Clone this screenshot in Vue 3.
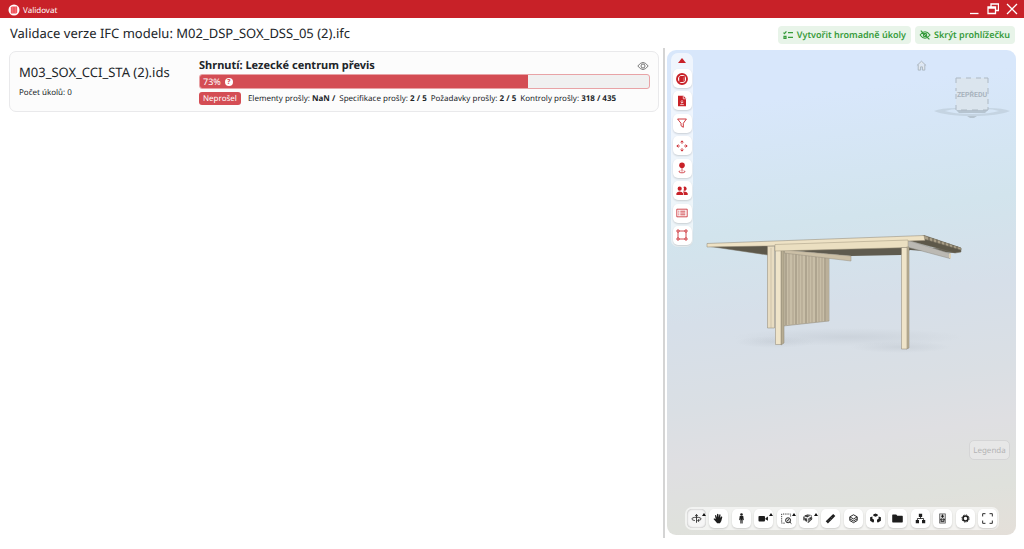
<script setup>
import { ref } from 'vue'

const progress = ref(73)
const stats = [
  { label: 'Elementy prošly:', value: 'NaN /' },
  { label: 'Specifikace prošly:', value: '2 / 5' },
  { label: 'Požadavky prošly:', value: '2 / 5' },
  { label: 'Kontroly prošly:', value: '318 / 435' },
]

const sideTools = [
  { label: 'Model', icon: '<circle cx="7" cy="7" r="5" fill="#fff" stroke="currentColor" stroke-width="1.9"/><path d="M4.2 5 5.4 4h4.4v5L8.6 10H4.2z" fill="currentColor"/><path d="M8.4 5.4V10" fill="none" stroke="#f5b5b8" stroke-width=".4"/>' },
  { label: 'Soubor', icon: '<path d="M3 1.8h5.5L11 4.4V12.2H3z" fill="currentColor"/><path d="M8.3 2v2.8H11M7 6v3M5.6 7.8 7 9.2l1.4-1.4M5.2 10.6h3.6" fill="none" stroke="#fff" stroke-width=".7"/>' },
  { label: 'Filtr', icon: '<path d="M2.6 3h8.8L8.3 7.3v4L6 9.7V7.3z" fill="none" stroke="currentColor" stroke-width=".9"/>' },
  { label: 'Přesunout', icon: '<path d="M7 1.8v3M7 9.2v3M1.8 7h3M9.2 7h3M5.5 3.4 7 1.9l1.5 1.5M5.5 10.6 7 12.1l1.5-1.5M3.4 5.5 1.9 7l1.5 1.5M10.6 5.5 12.1 7l-1.5 1.5" fill="none" stroke="currentColor" stroke-width=".9"/>' },
  { label: 'Bod', icon: '<circle cx="7" cy="4.3" r="2.8" fill="currentColor"/><path d="M7 6v4.5M5.3 9.8c-2.2.5-1.4 2 1.7 2s3.9-1.5 1.7-2" fill="none" stroke="currentColor" stroke-width=".8"/>' },
  { label: 'Uživatelé', icon: '<path d="M4.7 2.6a2.1 2.1 0 1 1 0 4.2 2.1 2.1 0 0 1 0-4.2m4.8 0a2.1 2.1 0 1 1-1 3.9q1-1.7 0-3.5zM1.4 11V9.2q1-1.7 3.3-1.7T8 9.2V11zm7.3 0V9L8 7.6q3.6-.5 4.7 1.6V11z" fill="currentColor"/>' },
  { label: 'Seznam', icon: '<path d="M1.8 3.2h10.4v7.6H1.8zM5.3 5.2h5M5.3 7h5M5.3 8.8h5M3.3 5.2h1M3.3 7h1M3.3 8.8h1" fill="none" stroke="currentColor" stroke-width=".8"/>' },
  { label: 'Výběr', icon: '<path d="M3 3h8v8H3z" fill="none" stroke="currentColor" stroke-width=".8"/><path d="M2 2h2v2H2zM10 2h2v2h-2zM2 10h2v2H2zM10 10h2v2h-2z" fill="#fff" stroke="currentColor" stroke-width=".8"/>' },
]

const bottomTools = [
  { label: 'Orbita', menu: true, active: true, icon: '<path d="M5.2 9.2C.7 8.5.6 5.9 7 5.6c6.3.2 6.3 3 1.5 3.6M7 11.6V2.8M5.6 4.2 7 2.6l1.4 1.6M9.8 7.8 8.2 9.2l1.6 1.3" fill="none" stroke="currentColor" stroke-width=".9"/>' },
  { label: 'Posun', icon: '<path d="M4.7 11 1.6 7.5q.4-1 1.4-.4l1 .8-.8-4.2q.8-1 1.4 0l.8 2.4V2.3q.8-.9 1.5 0l.3 3.6.7-3.1q.9-.7 1.3.2l-.3 3.5 1-1.6q.9-.4 1.2.5l-1.1 4.3-1.4 2.5H5.5z" fill="currentColor"/>' },
  { label: 'Procházka', icon: '<circle cx="7" cy="2.7" r="1.4" fill="currentColor"/><path d="M5.1 4.4h3.8l.6 4.2-.9.2-.4-2V12.3H7.2V9h-.4v3.3h-1V6.8l-.4 2-.9-.2z" fill="currentColor"/>' },
  { label: 'Kamera', menu: true, icon: '<rect x="1.6" y="4.2" width="7" height="6" rx="1" fill="currentColor"/><path d="m9.1 6.7 2.7-1.8v4.6L9.1 7.8z" fill="currentColor"/>' },
  { label: 'Přiblížení výběru', menu: true, icon: '<path d="M5 12H1.8V2.2h9.6v2.6" fill="none" stroke="currentColor" stroke-width=".9" stroke-dasharray="1.4 1"/><circle cx="8.7" cy="8.9" r="2.7" fill="#ddd" stroke="currentColor" stroke-width="1"/><path d="m10.5 10.8 1.8 1.7M7.5 9.9l2.4-2.2" stroke="currentColor"/>' },
  { label: 'Objekty', menu: true, icon: '<path d="m1.8 5 3.8-2.7 4.8.9.8 4.4-4.2 4.2-4-2.4z" fill="#666"/><path d="m2.4 5.3 3.8 1.2v4.4M6.2 6.5 10 4M8.5 7v3" fill="none" stroke="#fff" stroke-width="1.1"/><path d="m3 3.8 3.6 1M3 8l2.5 1M7.2 8.2l3-2M7 10.5l3.6-3M2 5v4" fill="none" stroke="currentColor"/>' },
  { label: 'Měření', icon: '<path d="m1.9 10 8-7.8L12.2 4.4 4.2 12.3z" fill="currentColor"/><path d="m4.5 9.2.7.7m1.1-2.4.7.7m1.1-2.4.7.7" stroke="#fff" stroke-width=".4"/>' },
  { label: 'Vrstvy', icon: '<path d="m3 5.2 4-2.2 4 2.2-4 2.3zM3 5.4v3.8l4 2.3 4-2.3V5.4M3 7.4l4 2.2 4-2.2" fill="none" stroke="currentColor" stroke-width="1"/>' },
  { label: 'Rozložení modelu', icon: '<path d="m7 1.6 2.4 1.2V4L7 5.2 4.6 4V2.8zM1.2 5.6l2.5-.8v2.4l1.8 1.2-.3 2.6-1 .4-3-2zM12.8 5.6l-2.5-.8v2.4L8.5 8.4l.3 2.6 1 .4 3-2z" fill="currentColor"/>' },
  { label: 'Složka', icon: '<path d="M1.3 3.5q0-.7.7-.7h3.6l1.2 1.3H12q.7 0 .7.7v5.7q0 .7-.7.7H2q-.7 0-.7-.7z" fill="currentColor"/>' },
  { label: 'Struktura', icon: '<path d="M5.2 1.8h3.6v3.5H5.2zM1.9 8.6h3.5v3.5H1.9zm6.7 0h3.5v3.5H8.6z" fill="currentColor"/><path d="M7 5v2M3.7 9V7h6.6v2" fill="none" stroke="currentColor" stroke-width=".9"/>' },
  { label: 'Vlastnosti', icon: '<path d="M3.8 2h6.4v10H3.8z" fill="#ccc" stroke="#666" stroke-width=".8"/><path d="M7 2.8v3.4M5.5 4.5h3" stroke="currentColor" stroke-width="1.1"/><path d="M5 7.5h1.4v1.4H5zM7.7 7.5h1.4v1.4H7.7zM5 10.3h4" fill="none" stroke="currentColor" stroke-width=".9"/>' },
  { label: 'Nastavení', icon: '<circle cx="7" cy="7" r="2.7" fill="none" stroke="currentColor" stroke-width="1.7"/><circle cx="7" cy="7" r="3.9" fill="none" stroke="currentColor" stroke-width="1" stroke-dasharray="1.55 1.51"/>' },
  { label: 'Celá obrazovka', icon: '<path d="M1.8 4.8v-3h3M9.2 1.8h3v3M12.2 9.2v3h-3M4.8 12.2h-3v-3" fill="none" stroke="currentColor"/>' },
]

const slats = [786, 789, 793, 796, 799, 802, 806, 809, 812, 816, 819, 822, 825, 827]
const planks = [929, 933, 937, 941, 945, 949, 953, 957]
</script>

<template>
  <div class="app">
    <header class="titlebar">
      <svg class="brand" viewBox="0 0 12 12" aria-hidden="true"><circle cx="6" cy="6" r="5.5" fill="#fff" /><path d="m2.8 3.4 1-.9h5.4v6l-1 1H2.8z" fill="#f0545c" /><path d="M4.6 3v6.4M7.4 3v6.4" stroke="#f58a8f" stroke-width=".5" /></svg>
      <span class="app-name">Validovat</span>
      <div class="window-buttons">
        <button type="button" aria-label="Minimalizovat"><svg viewBox="0 0 12 12"><path d="M2 10.5h8.5" /></svg></button>
        <button type="button" aria-label="Obnovit"><svg viewBox="0 0 12 12"><path d="M4 4V1h7.5v6.5H8.5M1 4h7.5v6.5H1zM1 5h7.5" /></svg></button>
        <button type="button" aria-label="Zavřít"><svg viewBox="0 0 12 12"><path d="m1 1 10 10M11 1 1 11" /></svg></button>
      </div>
    </header>

    <div class="heading">
      <h1>Validace verze IFC modelu: M02_DSP_SOX_DSS_05 (2).ifc</h1>
      <div class="actions">
        <button type="button" class="action">
          <svg viewBox="0 0 12 12" aria-hidden="true"><path d="m1.5 3.6 1 1L4.4 2.4M6 3.6h5M6 8.4h5M2 7.4h2v2H2z" /></svg>
          Vytvořit hromadně úkoly
        </button>
        <button type="button" class="action">
          <svg viewBox="0 0 12 12" aria-hidden="true"><path d="M1 6q5-6.5 10 0-5 6.5-10 0M1.8 1.6l8.6 8.8" /><circle cx="6" cy="6" r="1.7" /></svg>
          Skrýt prohlížečku
        </button>
      </div>
    </div>

    <main class="workspace">
      <section class="results">
        <article class="card">
          <div class="source">
            <h2>M03_SOX_CCI_STA (2).ids</h2>
            <p>Počet úkolů: 0</p>
          </div>
          <div class="summary">
            <div class="summary-head">
              <h3>Shrnutí: Lezecké centrum převis</h3>
              <button type="button" class="eye" aria-label="Zobrazit">
                <svg viewBox="0 0 12 12"><path d="M.8 6Q6-1 11.2 6 6 13 .8 6z" /><circle cx="6" cy="6" r="2" /></svg>
              </button>
            </div>
            <div class="progress" role="progressbar" :aria-valuenow="progress">
              <div class="fill" :style="{ width: progress + '%' }">
                {{ progress }}%<span class="help">?</span>
              </div>
            </div>
            <div class="stats">
              <span class="badge">Neprošel</span>
              <span v-for="s in stats" :key="s.label">{{ s.label }} <b>{{ s.value }}</b></span>
            </div>
          </div>
        </article>
      </section>

      <div class="divider"></div>

      <section class="viewer">
        <svg class="scene" viewBox="667 50 349 485" preserveAspectRatio="xMidYMid meet" aria-label="3D model">
          <defs>
            <radialGradient id="shade"><stop offset="0" stop-color="#a8afb9" stop-opacity=".25" /><stop offset="1" stop-color="#a8afb9" stop-opacity="0" /></radialGradient>
          </defs>
          <ellipse cx="848" cy="337" rx="115" ry="9" fill="url(#shade)" />
          <ellipse cx="775" cy="342" rx="40" ry="6" fill="url(#shade)" />
          <ellipse cx="900" cy="347" rx="50" ry="6" fill="url(#shade)" />
          <g stroke-linejoin="round" stroke-width=".5">
            <path d="M707 246 768 245v10z" fill="#5d584a" stroke="#777162" />
            <path d="M781 250 829 257v64l-46 5z" fill="#c8bea7" stroke="#888170" />
            <path v-for="(x, i) in slats" :key="x" :d="`M${x} 252v${73 - i / 3}`" :stroke="i % 3 ? '#a39985' : '#7f7766'" stroke-width=".7" />
            <path d="m783 250 120-3 54 2-2 4-45-3-9 5-50 1z" fill="#5f5b4f" />
            <path d="m785 250 66 6v5l-67-8z" fill="#cbbfa6" stroke="#999080" />
            <path d="M767.5 246h7v82h-7z" fill="#e8dcc1" stroke="#8e8573" />
            <path d="M771 248v80" stroke="#b8ad96" />
            <path d="m781 250 3 1v92l-3 2z" fill="#b7ac92" stroke="#8e8573" />
            <path d="M775.5 250h5.5v94.5h-5.5z" fill="#efe4c9" stroke="#8e8573" />
            <path d="m924 235.5 37 12.5v4l-6 1-45-12z" fill="#5d5849" stroke="#777161" />
            <path d="m924 235.5 37 12.5v2l-37-11z" fill="#aa9f87" stroke="#777161" />
            <path v-for="x in planks" :key="x" :d="`M${x} ${237 + (x - 929) / 3}v4`" stroke="#5c5748" stroke-width="1" />
            <path d="m907 240 43 13.5v5L907 247z" fill="#bbb9b3" stroke="#8d8a82" />
            <path d="M949 253.5h2v5l-2-.5z" fill="#ded3b8" />
            <path d="m707 243.5 217-8 1 5-17 .5-140 5-61 1z" fill="#eee2c5" stroke="#8e8573" />
            <path d="m775 244.5 133-4.5v7.5L775 251z" fill="#ebdfc1" stroke="#a0967f" />
            <path d="M906.5 247h2.5v101l-2.5 1z" fill="#bcb197" stroke="#8e8573" />
            <path d="M901.5 247.5h5.5V349h-5.5z" fill="#efe4c9" stroke="#8e8573" />
          </g>
        </svg>

        <div class="toolbar side" role="toolbar" aria-label="Nástroje modelu">
          <button type="button" class="collapse" aria-label="Sbalit"></button>
          <div class="side-list">
            <button v-for="t in sideTools" :key="t.label" type="button" class="tool" :aria-label="t.label">
              <svg viewBox="0 0 14 14" v-html="t.icon"></svg>
            </button>
          </div>
        </div>

        <div class="navigation">
          <button type="button" class="home" aria-label="Výchozí pohled">
            <svg viewBox="0 0 12 12"><path d="m1 6 5-4.7L11 6M2.4 5v6H5V7.5h2V11h2.6V5" /></svg>
          </button>
          <svg class="cube" viewBox="0 0 80 46" aria-label="Pohled zepředu">
            <path d="M2 35Q9 32 24 32h32q15 0 22 3-12 5-38 5T2 35m11 0q9 3 27 3t27-3q-6-2-14-2H27q-8 0-14 2" fill="#bccbd7" fill-rule="evenodd" opacity=".65" />
            <path d="M24 34h32l-3 3H27zM35 40h10l-3 2h-4z" fill="#b6c4d0" />
            <path d="M24 2h32v32H24z" fill="#dbe5ee" />
            <path d="M24 7V2h5M34 2h5M44 2h5M52 2h4v5M56 12v6M56 23v5M56 31v3h-5M46 34h-6M35 34h-6M24 29v5M24 23v-5M24 12v3" fill="none" stroke="#adb8c3" />
            <text x="40" y="21">ZEPŘEDU</text>
          </svg>
        </div>

        <button type="button" class="legend">Legenda</button>

        <div class="toolbar bottom" role="toolbar" aria-label="Nástroje pohledu">
          <button v-for="t in bottomTools" :key="t.label" type="button" class="tool" :class="{ active: t.active, menu: t.menu }" :aria-label="t.label">
            <svg viewBox="0 0 14 14" v-html="t.icon"></svg>
          </button>
        </div>
      </section>
    </main>
  </div>
</template>

<style>
body { margin: 0; background: #fff; }
</style>

<style scoped>
* { box-sizing: border-box; }
.app { display: flex; flex-direction: column; min-height: 100vh; font-family: "Noto Sans", "Open Sans", sans-serif; font-size: 8px; color: #212529; text-rendering: geometricPrecision; }
button { font: inherit; text-rendering: inherit; border: 0; padding: 0; margin: 0; background: none; color: inherit; display: flex; align-items: center; justify-content: center; }
svg { display: block; flex: none; }
h1, h2, h3, p { margin: 0; font-weight: 400; }
.titlebar { display: flex; align-items: center; height: 18px; padding: 2px 6px 0 8px; background: #c82128; color: #fff; }
.brand { width: 12px; height: 12px; margin-right: 3px; }
.window-buttons { display: flex; gap: 7px; margin-left: auto; padding-bottom: 2px; }
.window-buttons svg { width: 12px; height: 12px; fill: none; stroke: #fff; stroke-width: 1.3; }
.heading { display: flex; align-items: center; justify-content: space-between; height: 32px; padding: 0 9px 0 10px; }
h1 { font-size: 13px; line-height: 18px; padding-bottom: 2px; }
.actions { display: flex; gap: 4px; padding-top: 1px; }
.action { height: 18px; padding: 0 5px 0 4px; gap: 3px; border-radius: 4px; background: #e8f4e9; color: #369b3b; font-size: 9px; font-weight: 600; }
.action svg { width: 12px; height: 12px; fill: none; stroke: currentColor; stroke-width: 1.2; }
.workspace { flex: 1; display: flex; }
.results { flex: 1; min-width: 0; padding: 1px 4px 0 9px; }
.card { display: flex; height: 61px; padding: 6px 8px 4px 9px; border: 1px solid #e9e9eb; border-radius: 7px; background: #fcfcfc; }
.source { width: 180px; flex: none; padding-top: 5px; }
h2 { font-size: 13px; line-height: 18px; }
.source p { margin-top: 6px; line-height: 12px; }
.summary { flex: 1; min-width: 0; }
.summary-head { display: flex; align-items: center; justify-content: space-between; height: 14px; }
h3 { font-size: 11px; line-height: 14px; font-weight: 700; padding-top: 1px; }
.eye { padding-top: 2px; margin-right: 1px; }
.eye svg { width: 12px; height: 12px; fill: none; stroke: #777; }
.progress { height: 15px; margin-top: 2px; border: 1px solid #e8a3a6; border-radius: 3px; background: #f0f0f0; overflow: hidden; }
.fill { display: flex; align-items: center; height: 100%; padding-left: 3px; background: #d44d54; color: #fff; font-size: 9px; }
.help { display: grid; place-items: center; width: 8px; height: 8px; margin-left: 4px; border-radius: 50%; background: #fff; color: #d44d54; font-size: 7px; line-height: 8px; font-weight: 800; text-rendering: auto; }
.stats { display: flex; align-items: center; gap: 4px; margin-top: 3px; line-height: 13px; white-space: nowrap; }
.badge { margin-right: 3px; padding: 0 4px; border-radius: 3px; background: #d44d54; color: #fff; font-size: 8px; }
.divider { width: 2px; margin: -2px 2px 11px 0; background: #d4d4d4; }
.viewer { position: relative; width: 349px; flex: none; margin: 0 8px 14px 0; border-radius: 9px; overflow: hidden; background: linear-gradient(172deg, #d8e7fb 0%, #d8e7fb 12%, #d2e4ed 36%, #d6dfe9 52%, #dadfe4 68%, #dfdfe2 78%, #dfe1dc 90%, #e4dfd9 100%); }
.scene { position: absolute; inset: 0; width: 100%; height: 100%; }
.toolbar { position: absolute; background: rgba(255, 255, 255, .6); border-radius: 7px; }
.tool { position: relative; width: 19px; height: 19px; border-radius: 5px; background: #fff; box-shadow: 0 1px 2px rgba(0, 0, 0, .16); }
.tool svg { width: 14px; height: 14px; }
.side { left: 4px; top: 3px; padding: 1px 1px 2px; color: #c82128; }
.collapse { width: 20px; height: 13px; }
.collapse::before { content: ""; border: 4px solid transparent; border-top: 0; border-bottom: 5px solid #c82128; }
.side-list { display: flex; flex-direction: column; justify-content: space-between; align-items: center; height: 178px; padding-top: 2px; }
.bottom { left: 18px; right: 17px; bottom: 5px; display: flex; justify-content: space-between; padding: 2px; color: #1d1d1d; }
.bottom .tool svg { width: 13px; height: 13px; }
.active { background: #f6f6f6; box-shadow: inset 0 0 2px rgba(0, 0, 0, .35); }
.menu::after { content: ""; position: absolute; right: 0; top: 4px; border: 2px solid transparent; border-top: 0; border-bottom: 3px solid #111; }
.navigation { position: absolute; right: 4px; top: 10px; display: flex; align-items: flex-start; gap: 5px; }
.home svg { width: 11px; height: 11px; fill: #e2e8ee; stroke: #a9b3bd; stroke-width: 1; }
.cube { width: 80px; height: 46px; margin-top: 16px; }
.cube text { fill: #a6b1bc; font-family: Roboto, sans-serif; font-size: 7px; font-weight: 600; text-anchor: middle; }
.legend { position: absolute; right: 6px; bottom: 75px; width: 41px; height: 20px; border: 1px solid #d5d5d6; border-radius: 5px; background: #e7e7e7; color: #b4b4b5; }
</style>
